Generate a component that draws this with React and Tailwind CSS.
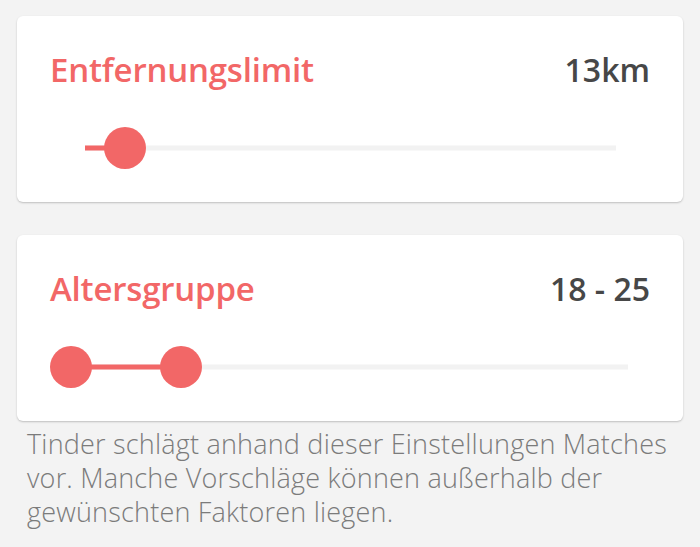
const font = { fontFamily: '"Open Sans", Lato, sans-serif' }

function Slider({ from, to, inset, hasStart }) {
  // from/to are 0..1 positions along the track
  return (
    <div className="relative h-[44px]" style={{ marginLeft: inset[0], marginRight: inset[1] }}>
      <div className="absolute left-0 right-0 top-1/2 h-[5px] -translate-y-1/2 bg-[#f2f2f2]" />
      <div
        className="absolute top-1/2 h-[5px] -translate-y-1/2 bg-[#f26767]"
        style={{ left: `${from * 100}%`, width: `${(to - from) * 100}%` }}
      />
      {hasStart && (
        <div
          className="absolute top-1/2 h-[42px] w-[42px] -translate-x-1/2 -translate-y-1/2 rounded-full bg-[#f26767]"
          style={{ left: `${from * 100}%` }}
        />
      )}
      <div
        className="absolute top-1/2 h-[42px] w-[42px] -translate-x-1/2 -translate-y-1/2 rounded-full bg-[#f26767]"
        style={{ left: `${to * 100}%` }}
      />
    </div>
  )
}

function Card({ title, value, children }) {
  return (
    <div className="rounded-[6px] bg-white px-[33px] pt-[32px] pb-[32px] shadow-[0_1px_2px_rgba(0,0,0,0.22)]">
      <div className="flex items-baseline justify-between">
        <span className="text-[33px] leading-[44px] font-semibold tracking-[-0.2px] text-[#f26767]">{title}</span>
        <span className="text-[32px] leading-[44px] font-semibold text-[#474747]">{value}</span>
      </div>
      <div className="mt-[34px]">{children}</div>
    </div>
  )
}

export default function App() {
  return (
    <div className="min-h-[547px] w-[700px] bg-[#f3f3f3] px-[17px] pt-[16px]" style={font}>
      <Card title="Entfernungslimit" value="13km">
        <Slider from={0} to={0.075} inset={[35, 34]} />
      </Card>

      <div className="mt-[33px]">
        <Card title="Altersgruppe" value="18 - 25">
          <Slider from={0} to={0.1975} inset={[21, 22]} hasStart />
        </Card>
      </div>

      <p className="mt-[6px] pl-[10px] pr-[8px] text-[27px] leading-[34px] font-light tracking-[0.2px] text-[#7b7b7b]">
        Tinder schlägt anhand dieser Einstellungen Matches vor. Manche Vorschläge können außerhalb der gewünschten Faktoren liegen.
      </p>
    </div>
  )
}
